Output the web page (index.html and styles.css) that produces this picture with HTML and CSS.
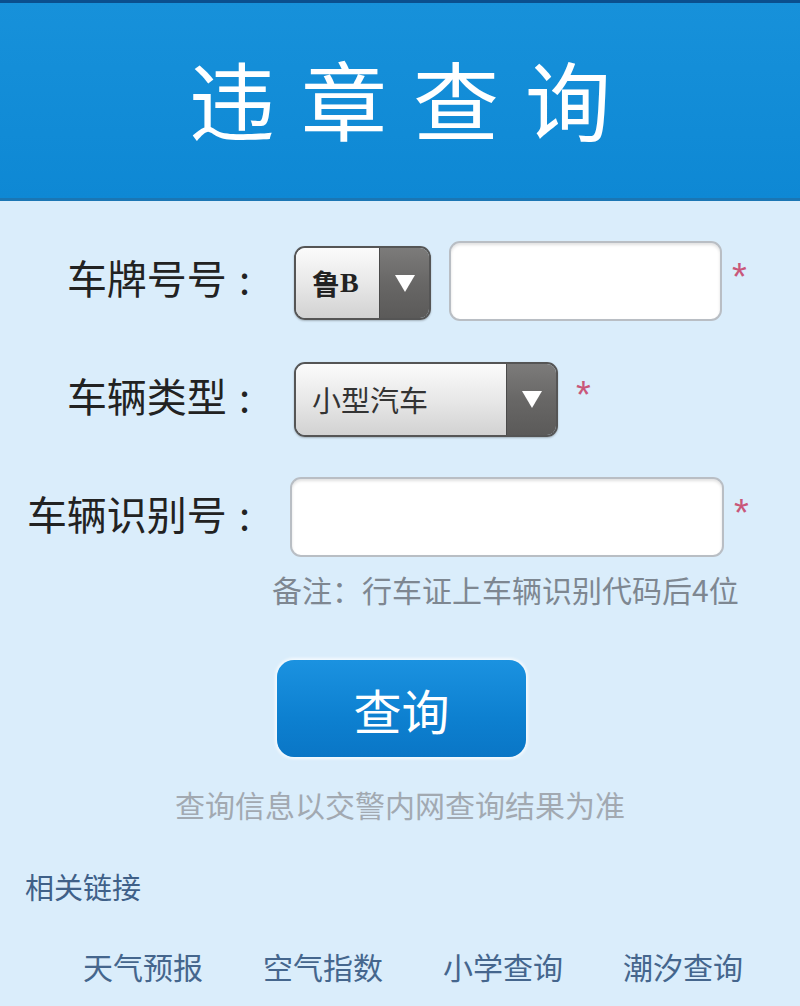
FILE: index.html
```html
<!DOCTYPE html>
<html lang="zh-CN">
<head>
<meta charset="utf-8">
<title>违章查询</title>
<link rel="stylesheet" href="styles.css">
</head>
<body>
<header class="header">
  <h1 class="title">违章查询</h1>
</header>
<main class="form">
  <div class="row row-plate">
    <label class="label">车牌号号<span class="colon">:</span></label>
    <div class="select select-short">
      <span class="select-text select-text-bold">鲁<span class="latin">B</span></span>
      <span class="select-btn"><span class="tri"></span></span>
    </div>
    <div class="input input-plate"></div>
    <span class="req">*</span>
  </div>
  <div class="row row-type">
    <label class="label">车辆类型<span class="colon">:</span></label>
    <div class="select select-long">
      <span class="select-text">小型汽车</span>
      <span class="select-btn"><span class="tri"></span></span>
    </div>
    <span class="req req-wide">*</span>
  </div>
  <div class="row row-vin">
    <label class="label">车辆识别号<span class="colon">:</span></label>
    <div class="input input-vin"></div>
    <span class="req">*</span>
  </div>
  <p class="note">备注：行车证上车辆识别代码后4位</p>
  <div class="btn-wrap"><button class="btn" type="button">查询</button></div>
  <p class="disclaimer">查询信息以交警内网查询结果为准</p>
  <h2 class="links-title">相关链接</h2>
  <nav class="links">
    <a class="link">天气预报</a>
    <a class="link">空气指数</a>
    <a class="link">小学查询</a>
    <a class="link">潮汐查询</a>
  </nav>
</main>
</body>
</html>
```

FILE: styles.css
```css
html, body {
  margin: 0;
  padding: 0;
}
body {
  width: 800px;
  height: 1006px;
  overflow: hidden;
  background: #daedfb;
  font-family: "Noto Sans CJK SC", "Noto Sans", sans-serif;
  color: #222;
}
.header {
  height: 195px;
  border-top: 3px solid #0b4f8e;
  border-bottom: 3px solid #1a76b4;
  background: linear-gradient(#1791da, #0e88d4);
  display: flex;
  align-items: center;
  justify-content: center;
}
.title {
  margin: 0 0 6px;
  color: #fff;
  font-size: 86px;
  font-weight: 400;
  letter-spacing: 26px;
  padding-left: 26px;
  line-height: 1;
}
.form {
  padding-top: 40px;
}
.row {
  display: flex;
  align-items: center;
  height: 80px;
}
.row-type, .row-vin {
  margin-top: 38px;
}
.label {
  width: 250px;
  text-align: right;
  font-size: 40px;
  line-height: 1;
  color: #222;
  white-space: nowrap;
  margin-bottom: 8px;
}
.colon {
  margin-left: 12px;
}
.select {
  display: flex;
  box-sizing: border-box;
  height: 75px;
  border: 2px solid #555;
  border-radius: 11px;
  overflow: hidden;
  margin-left: 44px;
  box-shadow: 0 1px 2px rgba(0,0,0,.25);
}
.select-short {
  width: 137px;
  height: 74px;
  margin-top: 4px;
}
.select-long {
  width: 264px;
}
.select-text {
  flex: 1;
  display: flex;
  align-items: center;
  padding-left: 16px;
  background: linear-gradient(#fbfbfb, #e6e6e6 55%, #d2d2d2);
  font-size: 29px;
  color: #333;
}
.select-text-bold {
  font-size: 28px;
  font-weight: 700;
  color: #222;
}
.latin {
  font-family: "Liberation Serif", serif;
  font-size: 28px;
}
.select-btn {
  width: 49px;
  display: flex;
  align-items: center;
  justify-content: center;
  background: linear-gradient(#7c7b7a, #686766 50%, #5b5a59);
  border-left: 1px solid #4a4a4a;
}
.tri {
  width: 0;
  height: 0;
  border-left: 10px solid transparent;
  border-right: 10px solid transparent;
  border-top: 17px solid #fff;
}
.input {
  box-sizing: border-box;
  height: 80px;
  background: #fff;
  border: 2px solid #b9bec4;
  border-radius: 11px;
  box-shadow: inset 0 2px 3px rgba(0,0,0,.12);
}
.input-plate {
  width: 273px;
  margin-left: 18px;
}
.input-vin {
  width: 434px;
  margin-left: 40px;
}
.req {
  margin-left: 10px;
  color: #c9587a;
  font-family: "Liberation Sans", sans-serif;
  font-size: 38px;
  line-height: 1;
  align-self: center;
  margin-top: -8px;
}
.req-wide {
  margin-left: 18px;
}
.note {
  margin: 14px 0 0;
  padding-left: 272px;
  font-size: 30px;
  line-height: 36px;
  color: #7e8791;
}
.btn-wrap {
  display: flex;
  justify-content: center;
  margin-top: 53px;
  padding-left: 3px;
}
.btn {
  width: 249px;
  height: 97px;
  border: none;
  border-radius: 17px;
  background: linear-gradient(#1b92e0, #0d80d0 60%, #0a76c6);
  box-shadow: 0 0 3px 2px rgba(255,255,255,.7);
  color: #fff;
  font-family: "Noto Sans CJK SC", sans-serif;
  font-size: 48px;
  padding: 0;
}
.disclaimer {
  margin: 29px 0 0;
  text-align: center;
  font-size: 30px;
  line-height: 36px;
  color: #a2a9b1;
}
.links-title {
  margin: 46px 0 0;
  padding-left: 25px;
  font-size: 29px;
  line-height: 36px;
  font-weight: 400;
  color: #3f6088;
}
.links {
  display: flex;
  gap: 60px;
  margin-top: 44px;
  padding-left: 83px;
}
.link {
  font-size: 30px;
  line-height: 36px;
  color: #45668d;
  text-decoration: none;
}
```
